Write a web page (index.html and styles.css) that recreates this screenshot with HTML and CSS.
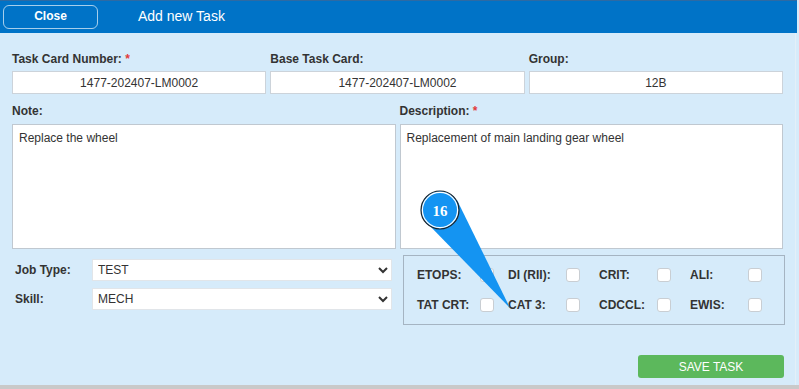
FILE: index.html
```html
<!DOCTYPE html>
<html lang="en">
<head>
    <meta charset="UTF-8">
    <meta name="viewport" content="width=device-width, initial-scale=1.0">
    <title>Add new Task</title>
    <link rel="stylesheet" href="styles.css">
</head>
<body>
    <div class="page">
        <div class="header">
            <button class="close-btn">Close</button>
            <span class="title">Add new Task</span>
        </div>

        <div class="content">
            <div class="row-3">
                <div class="field">
                    <label>Task Card Number: <span class="req">*</span></label>
                    <input type="text" class="text-input" value="1477-202407-LM0002">
                </div>
                <div class="field">
                    <label>Base Task Card:</label>
                    <input type="text" class="text-input" value="1477-202407-LM0002">
                </div>
                <div class="field">
                    <label>Group:</label>
                    <input type="text" class="text-input" value="12B">
                </div>
            </div>

            <div class="row-2">
                <div class="field">
                    <label>Note:</label>
                    <textarea class="text-area">Replace the wheel</textarea>
                </div>
                <div class="field">
                    <label>Description: <span class="req">*</span></label>
                    <textarea class="text-area">Replacement of main landing gear wheel</textarea>
                </div>
            </div>

            <div class="bottom">
                <div class="selects">
                    <div class="select-row">
                        <span class="select-label">Job Type:</span>
                        <select class="select-input"><option>TEST</option></select>
                    </div>
                    <div class="select-row">
                        <span class="select-label">Skill:</span>
                        <select class="select-input"><option>MECH</option></select>
                    </div>
                </div>

                <fieldset class="flags">
                    <div class="flag-grid">
                        <span class="flag-label">ETOPS:</span><input type="checkbox" class="chk">
                        <span class="flag-label">DI (RII):</span><input type="checkbox" class="chk">
                        <span class="flag-label">CRIT:</span><input type="checkbox" class="chk">
                        <span class="flag-label">ALI:</span><input type="checkbox" class="chk">
                        <span class="flag-label">TAT CRT:</span><input type="checkbox" class="chk">
                        <span class="flag-label">CAT 3:</span><input type="checkbox" class="chk">
                        <span class="flag-label">CDCCL:</span><input type="checkbox" class="chk">
                        <span class="flag-label">EWIS:</span><input type="checkbox" class="chk">
                    </div>
                </fieldset>
            </div>

            <div class="actions">
                <button class="save-btn">SAVE TASK</button>
            </div>
        </div>

        <!-- callout marker -->
        <svg class="callout" width="799" height="389" viewBox="0 0 799 389">
            <polygon points="428,224 457,200 510,308" fill="#1494f2"/>
            <circle cx="440" cy="210" r="19" fill="#1494f2" stroke="#222" stroke-width="1.2"/>
            <circle cx="440" cy="210" r="17.6" fill="none" stroke="#fff" stroke-width="1.2"/>
            <text x="440" y="215.5" text-anchor="middle" class="callout-num">16</text>
        </svg>
    </div>
</body>
</html>
```

FILE: styles.css
```css
body {
    margin: 0;
    background-color: #c9c9c9;
    font-family: "Liberation Sans", Arial, sans-serif;
    font-size: 12px;
    color: #333;
}
.page {
    position: relative;
    width: 799px;
    height: 385px;
    background-color: #d6ebfa;
    overflow: hidden;
}
.header {
    display: flex;
    align-items: center;
    height: 32px;
    border-top: 1px solid #2d6aa3;
    background-color: #0073c7;
    width: 797px;
}
.close-btn {
    width: 95px;
    height: 24px;
    margin-left: 3px;
    border: 1px solid rgba(255,255,255,0.65);
    border-radius: 6px;
    background: transparent;
    color: #fff;
    font-family: "Liberation Sans", Arial, sans-serif;
    font-size: 12px;
    font-weight: bold;
    padding: 0 0 2px 0;
}
.title {
    margin-left: 40px;
    color: #fff;
    font-size: 14px;
    padding-bottom: 2px;
}
.content {
    padding: 19px 12px 0 12px;
    width: 771px;
    height: 333px;
    border-right: 1px solid #e4eff8;
}
.row-3 {
    display: grid;
    grid-template-columns: 1fr 1fr 1fr;
    column-gap: 4px;
}
.row-2 {
    display: grid;
    grid-template-columns: 1fr 1fr;
    column-gap: 4px;
    margin-top: 10px;
}
.field {
    display: flex;
    flex-direction: column;
}
.field label {
    display: block;
    font-weight: bold;
    line-height: 15px;
    margin-bottom: 4px;
}
.row-2 .field label {
    margin-bottom: 5px;
}
.req {
    color: #e23b3b;
}
.text-input {
    box-sizing: border-box;
    height: 23px;
    border: 1px solid #ccd3da;
    background: #fff;
    text-align: center;
    font-family: "Liberation Sans", Arial, sans-serif;
    font-size: 12px;
    color: #333;
    padding: 0;
    outline: none;
}
.text-area {
    box-sizing: border-box;
    height: 125px;
    border: 1px solid #c0c8d0;
    background: #fff;
    font-family: "Liberation Sans", Arial, sans-serif;
    font-size: 12px;
    color: #333;
    padding: 6px 6px;
    resize: none;
    outline: none;
}
.bottom {
    display: flex;
    margin-top: 6px;
}
.selects {
    flex-shrink: 0;
    width: 381px;
    padding-top: 4px;
    display: flex;
    flex-direction: column;
    gap: 7px;
}
.select-row {
    display: flex;
    align-items: center;
}
.select-label {
    width: 77px;
    padding-left: 3px;
    font-weight: bold;
}
.select-input {
    box-sizing: border-box;
    width: 300px;
    height: 22px;
    border: 1px solid #e1e5e9;
    border-radius: 0;
    background: #fff;
    font-family: "Liberation Sans", Arial, sans-serif;
    font-size: 12px;
    color: #333;
    padding: 0 1px;
    outline: none;
}
.flags {
    flex-shrink: 0;
    box-sizing: border-box;
    width: 382px;
    height: 70px;
    margin: 0 0 0 10px;
    padding: 12px 0 0 13px;
    border: 1px solid #a5b4c2;
}
.flag-grid {
    display: grid;
    grid-template-columns: 63px 28px 58px 33px 58px 33px 58px 1fr;
    grid-auto-rows: 14px;
    row-gap: 16px;
    align-items: center;
}
.flag-label {
    font-weight: bold;
}
.chk {
    appearance: none;
    -webkit-appearance: none;
    width: 14px;
    height: 14px;
    margin: 0;
    border: 1px solid #c9ced3;
    border-radius: 3px;
    background: #fff;
}
.actions {
    display: flex;
    justify-content: flex-end;
    margin-top: 30px;
    margin-right: -1px;
}
.save-btn {
    width: 146px;
    height: 23px;
    border: none;
    border-radius: 3px;
    background-color: #5cb85c;
    color: #fff;
    font-family: "Liberation Sans", Arial, sans-serif;
    font-size: 12px;
    padding: 0;
}
.callout {
    position: absolute;
    left: 0;
    top: 0;
    pointer-events: none;
}
.callout-num {
    font-family: "Liberation Serif", "DejaVu Serif", serif;
    font-size: 15px;
    font-weight: bold;
    fill: #fff;
}
```
